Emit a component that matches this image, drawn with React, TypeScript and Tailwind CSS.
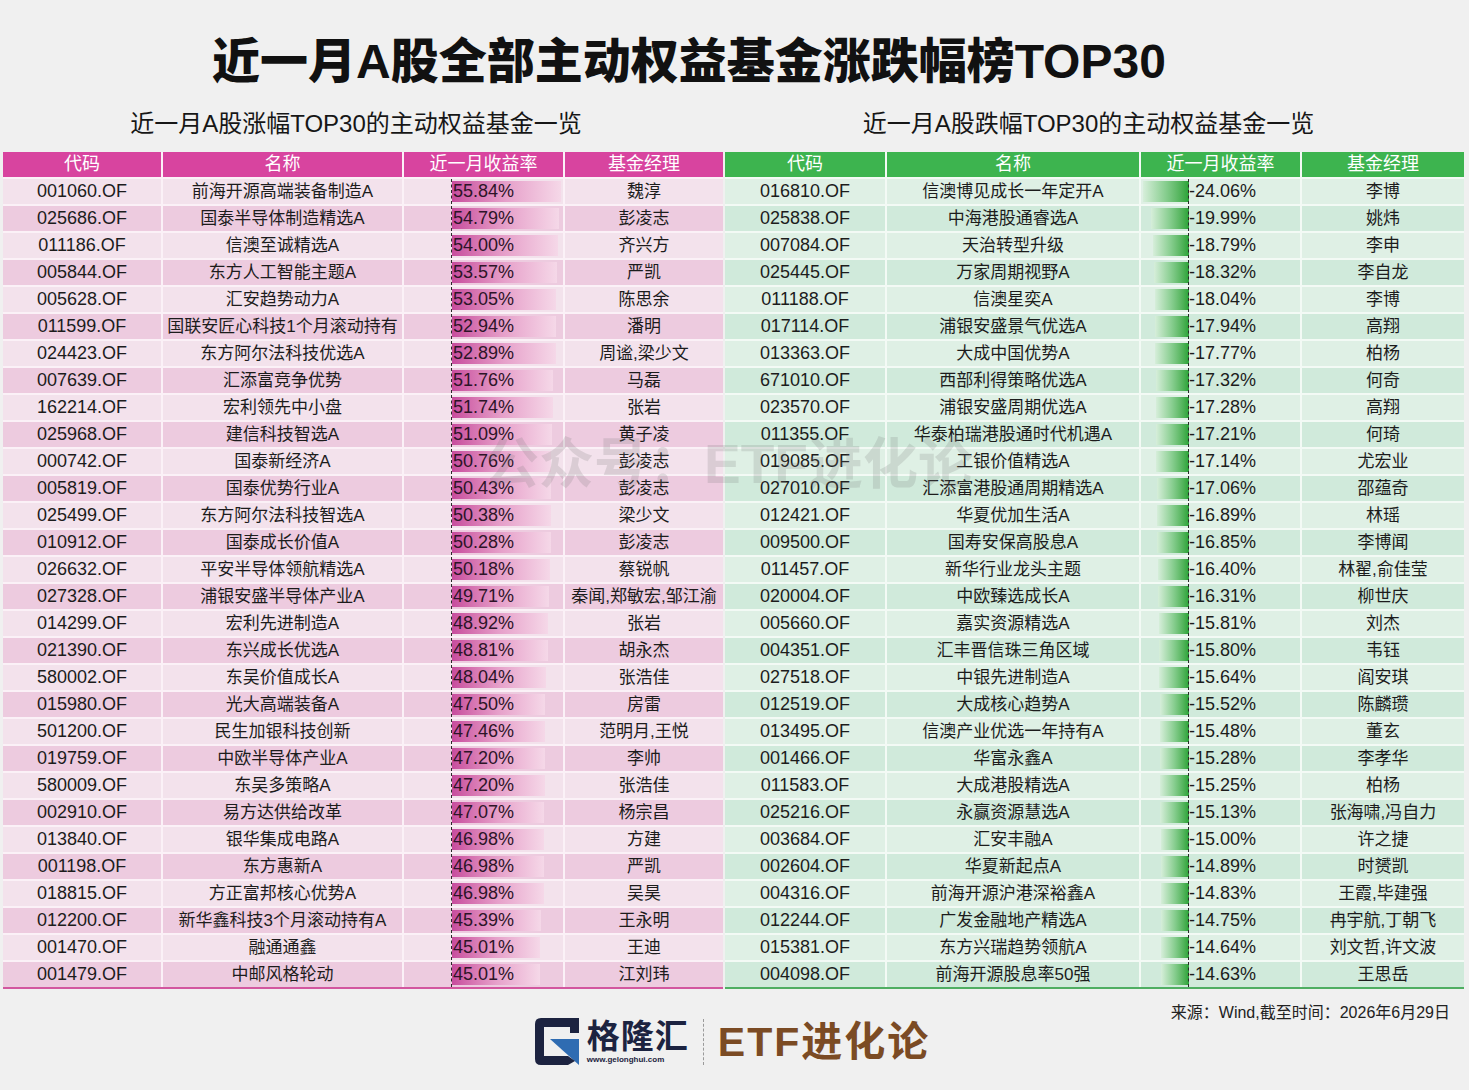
import React from 'react';

type Fund = [string, string, number, string];

const gainers: Fund[] = [
  ['001060.OF', '前海开源高端装备制造A', 55.84, '魏淳'],
  ['025686.OF', '国泰半导体制造精选A', 54.79, '彭凌志'],
  ['011186.OF', '信澳至诚精选A', 54.0, '齐兴方'],
  ['005844.OF', '东方人工智能主题A', 53.57, '严凯'],
  ['005628.OF', '汇安趋势动力A', 53.05, '陈思余'],
  ['011599.OF', '国联安匠心科技1个月滚动持有', 52.94, '潘明'],
  ['024423.OF', '东方阿尔法科技优选A', 52.89, '周谧,梁少文'],
  ['007639.OF', '汇添富竞争优势', 51.76, '马磊'],
  ['162214.OF', '宏利领先中小盘', 51.74, '张岩'],
  ['025968.OF', '建信科技智选A', 51.09, '黄子凌'],
  ['000742.OF', '国泰新经济A', 50.76, '彭凌志'],
  ['005819.OF', '国泰优势行业A', 50.43, '彭凌志'],
  ['025499.OF', '东方阿尔法科技智选A', 50.38, '梁少文'],
  ['010912.OF', '国泰成长价值A', 50.28, '彭凌志'],
  ['026632.OF', '平安半导体领航精选A', 50.18, '蔡锐帆'],
  ['027328.OF', '浦银安盛半导体产业A', 49.71, '秦闻,郑敏宏,邹江渝'],
  ['014299.OF', '宏利先进制造A', 48.92, '张岩'],
  ['021390.OF', '东兴成长优选A', 48.81, '胡永杰'],
  ['580002.OF', '东吴价值成长A', 48.04, '张浩佳'],
  ['015980.OF', '光大高端装备A', 47.5, '房雷'],
  ['501200.OF', '民生加银科技创新', 47.46, '范明月,王悦'],
  ['019759.OF', '中欧半导体产业A', 47.2, '李帅'],
  ['580009.OF', '东吴多策略A', 47.2, '张浩佳'],
  ['002910.OF', '易方达供给改革', 47.07, '杨宗昌'],
  ['013840.OF', '银华集成电路A', 46.98, '方建'],
  ['001198.OF', '东方惠新A', 46.98, '严凯'],
  ['018815.OF', '方正富邦核心优势A', 46.98, '吴昊'],
  ['012200.OF', '新华鑫科技3个月滚动持有A', 45.39, '王永明'],
  ['001470.OF', '融通通鑫', 45.01, '王迪'],
  ['001479.OF', '中邮风格轮动', 45.01, '江刘玮'],
];

const losers: Fund[] = [
  ['016810.OF', '信澳博见成长一年定开A', -24.06, '李博'],
  ['025838.OF', '中海港股通睿选A', -19.99, '姚炜'],
  ['007084.OF', '天治转型升级', -18.79, '李申'],
  ['025445.OF', '万家周期视野A', -18.32, '李自龙'],
  ['011188.OF', '信澳星奕A', -18.04, '李博'],
  ['017114.OF', '浦银安盛景气优选A', -17.94, '高翔'],
  ['013363.OF', '大成中国优势A', -17.77, '柏杨'],
  ['671010.OF', '西部利得策略优选A', -17.32, '何奇'],
  ['023570.OF', '浦银安盛周期优选A', -17.28, '高翔'],
  ['011355.OF', '华泰柏瑞港股通时代机遇A', -17.21, '何琦'],
  ['019085.OF', '工银价值精选A', -17.14, '尤宏业'],
  ['027010.OF', '汇添富港股通周期精选A', -17.06, '邵蕴奇'],
  ['012421.OF', '华夏优加生活A', -16.89, '林瑶'],
  ['009500.OF', '国寿安保高股息A', -16.85, '李博闻'],
  ['011457.OF', '新华行业龙头主题', -16.4, '林翟,俞佳莹'],
  ['020004.OF', '中欧臻选成长A', -16.31, '柳世庆'],
  ['005660.OF', '嘉实资源精选A', -15.81, '刘杰'],
  ['004351.OF', '汇丰晋信珠三角区域', -15.8, '韦钰'],
  ['027518.OF', '中银先进制造A', -15.64, '阎安琪'],
  ['012519.OF', '大成核心趋势A', -15.52, '陈麟瓒'],
  ['013495.OF', '信澳产业优选一年持有A', -15.48, '董玄'],
  ['001466.OF', '华富永鑫A', -15.28, '李孝华'],
  ['011583.OF', '大成港股精选A', -15.25, '柏杨'],
  ['025216.OF', '永赢资源慧选A', -15.13, '张海啸,冯自力'],
  ['003684.OF', '汇安丰融A', -15.0, '许之捷'],
  ['002604.OF', '华夏新起点A', -14.89, '时赟凯'],
  ['004316.OF', '前海开源沪港深裕鑫A', -14.83, '王霞,毕建强'],
  ['012244.OF', '广发金融地产精选A', -14.75, '冉宇航,丁朝飞'],
  ['015381.OF', '东方兴瑞趋势领航A', -14.64, '刘文哲,许文波'],
  ['004098.OF', '前海开源股息率50强', -14.63, '王思岳'],
];

const HEADERS = ['代码', '名称', '近一月收益率', '基金经理'];

const GainTable: React.FC = () => (
  <div className="flex flex-col gap-[2px] bg-[#fbf1f7] border-b-2 border-[#d2579f]">
    <div className="flex gap-[2px] h-[25px] text-white text-[18px] leading-[25px] text-center">
      <div className="w-[158px] bg-[#d8449f]">{HEADERS[0]}</div>
      <div className="w-[239px] bg-[#d8449f]">{HEADERS[1]}</div>
      <div className="w-[159px] bg-[#d8449f]">{HEADERS[2]}</div>
      <div className="w-[158px] bg-[#d8449f]">{HEADERS[3]}</div>
    </div>
    {gainers.map(([code, name, ret, mgr], i) => {
      const bg = i % 2 === 0 ? 'bg-[#f3e2ec]' : 'bg-[#edcbdf]';
      return (
        <div key={code} className="flex gap-[2px] h-[25px] text-[17px] leading-[25px] text-center text-[#1c1c1c]">
          <div className={`w-[158px] ${bg} text-[18px]`}>{code}</div>
          <div className={`w-[239px] ${bg} whitespace-nowrap`}>{name}</div>
          <div className={`w-[159px] ${bg} pl-[47px] flex`}>
            <div className="h-full border-l border-dashed border-[#2a2a2a] py-[2px]">
              <div
                className="h-full bg-linear-to-r from-[#c74c9d] via-[#e6a0ca] to-[#f5d8e8] text-left text-[18px] leading-[21px] text-[#2d1428] pl-[1px]"
                style={{ width: `${ret * 1.96}px` }}
              >
                {ret.toFixed(2)}%
              </div>
            </div>
          </div>
          <div className={`w-[158px] ${bg} whitespace-nowrap`}>{mgr}</div>
        </div>
      );
    })}
  </div>
);

const LossTable: React.FC = () => (
  <div className="flex flex-col gap-[2px] bg-[#f3faf5] border-b-2 border-[#4fae62]">
    <div className="flex gap-[2px] h-[25px] text-white text-[18px] leading-[25px] text-center">
      <div className="w-[160px] bg-[#3db44f]">{HEADERS[0]}</div>
      <div className="w-[252px] bg-[#3db44f]">{HEADERS[1]}</div>
      <div className="w-[159px] bg-[#3db44f]">{HEADERS[2]}</div>
      <div className="w-[162px] bg-[#3db44f]">{HEADERS[3]}</div>
    </div>
    {losers.map(([code, name, ret, mgr], i) => {
      const bg = i % 2 === 0 ? 'bg-[#dff0e5]' : 'bg-[#d0eadb]';
      return (
        <div key={code} className="flex gap-[2px] h-[25px] text-[17px] leading-[25px] text-center text-[#1c1c1c]">
          <div className={`w-[160px] ${bg} text-[18px]`}>{code}</div>
          <div className={`w-[252px] ${bg} whitespace-nowrap`}>{name}</div>
          <div className={`w-[159px] ${bg} flex`}>
            <div className="w-[48px] flex justify-end py-[2px]">
              <div
                className="h-full bg-linear-to-r from-[#d6eeda] via-[#86cd8e] to-[#27a336]"
                style={{ width: `${Math.abs(ret) * 1.9}px` }}
              />
            </div>
            <div className="h-full border-l border-dashed border-[#2a2a2a] text-left text-[18px] leading-[25px] -ml-px">
              {ret.toFixed(2)}%
            </div>
          </div>
          <div className={`w-[162px] ${bg} whitespace-nowrap`}>{mgr}</div>
        </div>
      );
    })}
  </div>
);

const GelonghuiMark: React.FC = () => (
  <svg width="44" height="47" viewBox="0 0 44 47">
    <path d="M6 0 H44 V15 H35 V9 H9 V38 H33 V47 H6 Q0 47 0 41 V6 Q0 0 6 0 Z" fill="#1c2340" />
    <polygon points="15,21 44,21 44,47" fill="#2f6cb2" />
    <polygon points="33,38 40,43 33,47" fill="#1c2340" />
  </svg>
);

export default function App() {
  return (
    <div className="relative w-[1469px] h-[1090px] overflow-hidden bg-[#f0f0f0] font-['Liberation_Sans','Noto_Sans_CJK_SC',sans-serif] text-[#111]">
      {/* Title */}
      <div className="pt-[35px] pl-[212px] h-[88px] text-[48px] leading-[53px] font-black">
        近一月A股全部主动权益基金涨跌幅榜TOP30
      </div>

      {/* Subtitles */}
      <div className="mt-[19px] flex px-[3px] h-[34px] text-[24px] leading-[34px] text-[#161616]">
        <div className="w-[720px] text-center pr-[14px]">近一月A股涨幅TOP30的主动权益基金一览</div>
        <div className="w-[739px] ml-[2px] text-center pr-[12px]">近一月A股跌幅TOP30的主动权益基金一览</div>
      </div>

      {/* Tables */}
      <div className="mt-[11px] flex gap-[2px] px-[3px]">
        <GainTable />
        <LossTable />
      </div>

      {/* Source */}
      <div className="mt-[13px] h-[22px] pr-[19px] text-right text-[16px] leading-[22px] text-[#222]">
        来源：Wind,截至时间：2026年6月29日
      </div>

      {/* Logos */}
      <div className="-mt-[6px] flex justify-center items-center pr-[4px]">
        <div className="flex items-center gap-[8px]">
          <GelonghuiMark />
          <div className="flex flex-col">
            <span className="text-[33px] leading-[36px] font-bold text-[#1c2340] tracking-[1px]">格隆汇</span>
            <span className="text-[8px] leading-[10px] font-bold text-[#1c2340]">www.gelonghui.com</span>
          </div>
        </div>
        <div className="mx-[14px] h-[46px] border-l border-dashed border-[#9a9a9a]" />
        <div className="text-[41px] leading-[46px] font-bold text-[#7b4b24] tracking-[2px]">ETF进化论</div>
      </div>

      {/* Watermark */}
      <div className="absolute left-[484px] top-[434px] text-[55px] leading-[60px] font-bold text-[#7a7a7a]/20 whitespace-nowrap pointer-events-none">
        公众号：ETF进化论
      </div>
    </div>
  );
}
